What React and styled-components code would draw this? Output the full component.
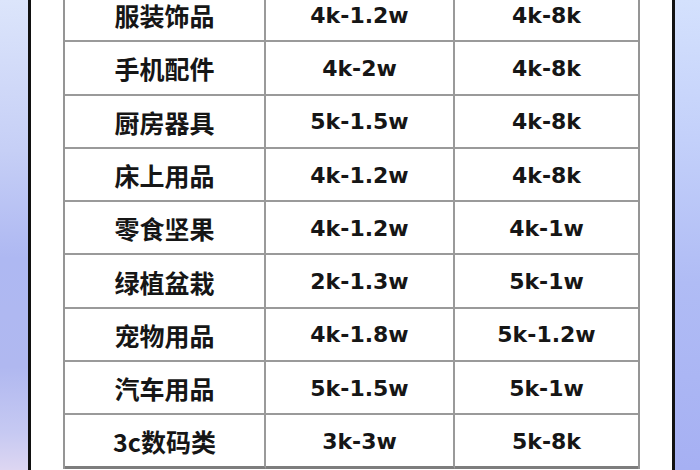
import React from "react";
import styled, { createGlobalStyle } from "styled-components";

const Global = createGlobalStyle`
  html, body { margin: 0; padding: 0; }
  body { width: 700px; height: 470px; overflow: hidden; background: #fff; }
`;

const Page = styled.div`
  width: 700px;
  height: 470px;
  overflow: hidden;
  display: flex;
  background: #fff;
`;

const Side = styled.div`
  flex: 0 0 ${(p) => p.$w}px;
  background: ${(p) =>
    p.$right
      ? "linear-gradient(180deg, #d4e1fd 0%, #c3d0fa 30%, #b0bcf5 60%, #a6b0f3 100%)"
      : "linear-gradient(180deg, #dce5fb 0%, #c6cff6 32%, #aeb8f2 55%, #b0b8f0 78%, #c6c9f2 92%, #ddd6f2 100%)"};
`;

const Card = styled.div`
  flex: 0 0 643px;
  box-sizing: border-box;
  background: #fff;
  border-left: 3px solid #111;
  border-right: 3px solid #111;
  padding: 0 32px 0 32px;
`;

const Table = styled.div`
  margin-top: -11px;
  display: grid;
  grid-template-columns: 201px 189px 183px;
  border-left: 2px solid #959595;
  border-right: 2px solid #959595;
`;

const Cell = styled.div`
  box-sizing: border-box;
  height: 53.3px;
  display: flex;
  align-items: center;
  justify-content: center;
  border-bottom: ${(p) => (p.$last ? "3px solid #7d7d7d" : "2px solid #9a9a9a")};
  border-right: ${(p) => (p.$end ? "none" : "2px solid #9a9a9a")};
  color: #161616;
  white-space: nowrap;
  font-family: ${(p) =>
    p.$cn
      ? '"Noto Sans CJK SC", "DejaVu Sans", sans-serif'
      : '"DejaVu Sans", "Noto Sans CJK SC", sans-serif'};
  font-size: ${(p) => (p.$cn ? "25px" : "22px")};
  font-weight: 700;
  padding-top: 1px;
`;

const rows = [
  ["服装饰品", "4k-1.2w", "4k-8k"],
  ["手机配件", "4k-2w", "4k-8k"],
  ["厨房器具", "5k-1.5w", "4k-8k"],
  ["床上用品", "4k-1.2w", "4k-8k"],
  ["零食坚果", "4k-1.2w", "4k-1w"],
  ["绿植盆栽", "2k-1.3w", "5k-1w"],
  ["宠物用品", "4k-1.8w", "5k-1.2w"],
  ["汽车用品", "5k-1.5w", "5k-1w"],
  ["3c数码类", "3k-3w", "5k-8k"],
];

export default function App() {
  return (
    <>
      <Global />
      <Page>
        <Side $w={28} />
        <Card>
          <Table>
            {rows.map((r, i) => {
              const last = i === rows.length - 1;
              return (
                <React.Fragment key={i}>
                  <Cell $cn $last={last}>{r[0]}</Cell>
                  <Cell $last={last}>{r[1]}</Cell>
                  <Cell $last={last} $end>{r[2]}</Cell>
                </React.Fragment>
              );
            })}
          </Table>
        </Card>
        <Side $w={29} $right />
      </Page>
    </>
  );
}
